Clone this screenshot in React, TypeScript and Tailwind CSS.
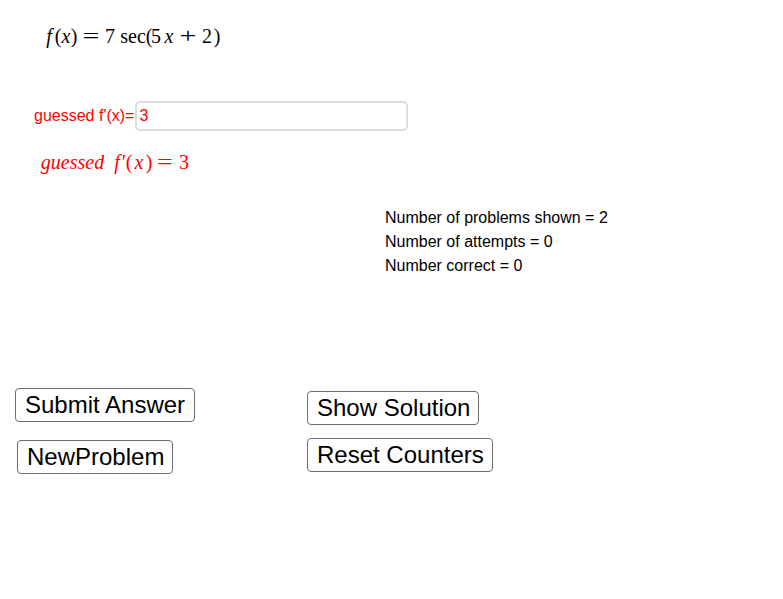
import React from "react";

const sans = { fontFamily: '"Liberation Sans", Arial, sans-serif' };
const serif = { fontFamily: '"Liberation Serif", "Times New Roman", serif' };

function T({ c, className = "", it = false }: { c: string; className?: string; it?: boolean }) {
  return (
    <span className={`flex justify-center shrink-0 overflow-visible ${it ? "italic" : ""} ${className}`}>
      {c}
    </span>
  );
}

function Btn({ label, className }: { label: string; className: string }) {
  return (
    <button
      className={`absolute bg-white border border-[#6e6e6e] rounded-[4px] px-[9px] h-[34px] text-[24px] leading-[32px] text-black whitespace-nowrap ${className}`}
      style={sans}
    >
      {label}
    </button>
  );
}

export default function App() {
  return (
    <div className="relative w-[783px] h-[599px] bg-white overflow-hidden">
      {/* f(x) formula */}
      <div
        className="absolute left-[44px] top-[24px] flex items-baseline text-[20px] leading-[24px] text-black whitespace-nowrap"
        style={serif}
      >
        <T c="f" it className="w-[10px]" />
        <T c="(" className="w-[8px]" />
        <T c="x" it className="w-[8px]" />
        <T c=")" className="w-[8px]" />
        <T c="=" className="w-[16px] ml-[5px] scale-x-150" />
        <T c="7" className="w-[8px] ml-[7px]" />
        <T c="sec" className="w-[24px] ml-[7px]" />
        <T c="(" className="w-[6px] ml-[1px]" />
        <T c="5" className="w-[8px]" />
        <T c="x" it className="w-[8px] ml-[5px]" />
        <T c="+" className="w-[16px] ml-[7px] scale-x-150" />
        <T c="2" className="w-[8px] ml-[7px]" />
        <T c=")" className="w-[6px] ml-[3px]" />
      </div>

      {/* input row */}
      <div className="absolute left-[34px] top-[101px] flex items-center h-[30px]" style={sans}>
        <span className="text-[16px] text-[#ff0000] leading-[20px] whitespace-nowrap">guessed f'(x)=</span>
        <div className="ml-[1px] w-[273px] h-[30px] border-2 border-[#dcdcdc] rounded-[5px] flex items-center pl-[2px] text-[16px] text-[#ff0000]">
          3
        </div>
      </div>

      {/* red formula */}
      <div
        className="absolute left-[40px] top-[150px] flex items-baseline text-[20px] leading-[24px] text-[#ff0000] whitespace-nowrap"
        style={serif}
      >
        <T c="guessed" it className="w-[65px]" />
        <T c="f" it className="w-[10px] ml-[7px]" />
        <T c="′" className="w-[4px]" />
        <T c="(" className="w-[6px]" />
        <T c="x" it className="w-[10px] ml-[2px]" />
        <T c=")" className="w-[6px] ml-[2px]" />
        <T c="=" className="w-[16px] ml-[5px] scale-x-140" />
        <T c="3" className="w-[8px] ml-[7px]" />
      </div>

      {/* stats */}
      <div className="absolute left-[385px] top-[206px] text-[16px] leading-[24px] text-black" style={sans}>
        <div>Number of problems shown = 2</div>
        <div>Number of attempts = 0</div>
        <div>Number correct = 0</div>
      </div>

      <Btn label="Submit Answer" className="left-[15px] top-[388px] w-[180px]" />
      <Btn label="NewProblem" className="left-[17px] top-[440px] w-[156px]" />
      <Btn label="Show Solution" className="left-[307px] top-[391px] w-[172px]" />
      <Btn label="Reset Counters" className="left-[307px] top-[438px] w-[186px]" />
    </div>
  );
}
